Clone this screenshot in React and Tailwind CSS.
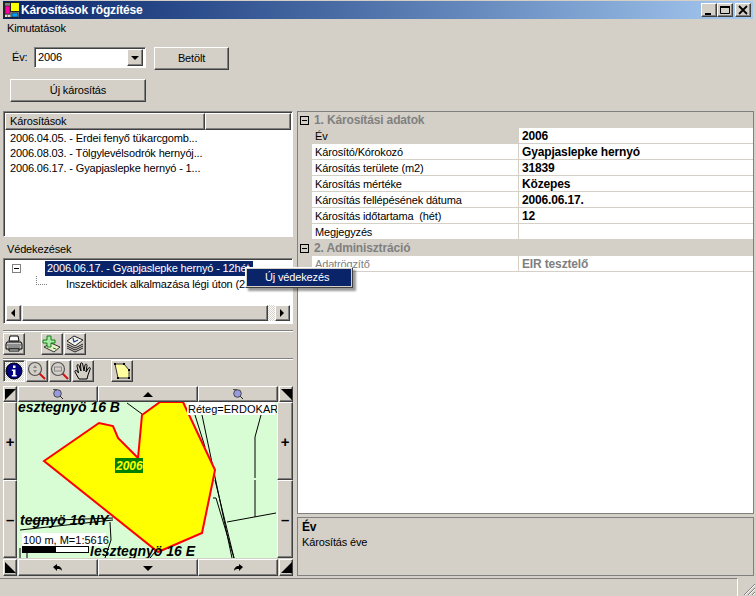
import React from 'react'

const raised = 'border border-t-white border-l-white border-r-[#404040] border-b-[#404040] shadow-[inset_-1px_-1px_0_#808080] bg-[#d4d0c8]'
const sunken = 'border border-t-[#808080] border-l-[#808080] border-r-white border-b-white shadow-[inset_1px_1px_0_#404040]'

const Separator = () => (
  <div className="h-[2px] border-t border-t-[#808080] border-b border-b-white" />
)

const TitleIcon = () => (
  <svg width="16" height="16" viewBox="0 0 16 16" className="shrink-0">
    <rect width="16" height="16" fill="#d4d0c8" />
    <rect x="0.5" y="0.5" width="15" height="15" fill="#808080" stroke="#222" />
    <rect x="1" y="4" width="5" height="8" fill="#ff00a0" stroke="#222" strokeWidth="0.6" />
    <rect x="6.5" y="0.5" width="9" height="9" fill="#ffff00" stroke="#222" />
    <rect x="8" y="11" width="6" height="4" fill="#00a0ff" stroke="#222" strokeWidth="0.6" />
    <rect x="1" y="13" width="2" height="2" fill="#ddd" />
    <rect x="4" y="13" width="2" height="2" fill="#ddd" />
  </svg>
)

const WinButton = ({ children }) => (
  <div className={`${raised} w-[16px] h-[14px] flex items-center justify-center`}>
    <svg width="12" height="10" viewBox="0 0 12 10">{children}</svg>
  </div>
)

const Printer = () => (
  <svg width="18" height="18" viewBox="0 0 18 18">
    <path d="M5 1h8l1 5H4z" fill="#fff" stroke="#000" />
    <path d="M2 7h14l1 2v5H1V9z" fill="#c8c8c8" stroke="#000" />
    <path d="M2 10h14M3 12h12" stroke="#555" />
    <path d="M4 14h10v2H4z" fill="#fff" stroke="#000" />
  </svg>
)

const AddLayer = () => (
  <svg width="20" height="20" viewBox="0 0 20 20">
    <path d="M2 13l7-4 9 4-6 5z" fill="#e8f0c8" stroke="#333" />
    <path d="M5 2h4v4h4v3H9v4H5V9H1V6h4z" fill="#a8e8a8" stroke="#108010" strokeWidth="1" />
    <path d="M11 14l3 1" stroke="#208020" />
  </svg>
)

const Layers = () => (
  <svg width="20" height="20" viewBox="0 0 20 20">
    <path d="M2 14l8 4 8-4M2 12l8 4 8-4M2 10l8 4 8-4" fill="none" stroke="#222" />
    <path d="M2 7l7-5 9 4-8 6z" fill="#f4f4e8" stroke="#222" />
    <path d="M8 4l1 4 4-2" fill="none" stroke="#1a3a9a" strokeWidth="1.2" />
  </svg>
)

const Info = () => (
  <svg width="18" height="18" viewBox="0 0 18 18">
    <circle cx="9" cy="9" r="8" fill="#000080" stroke="#000" />
    <path d="M8 3.5h2.500v2.500H8zM6.800 7.500h3.700v5.500h1.200v1.500H6.800V13h1.200V9H6.800z" fill="#fff" />
  </svg>
)

const Magnifier = ({ children }) => (
  <svg width="20" height="20" viewBox="0 0 20 20">
    <path d="M12 12l6 6" stroke="#d01010" strokeWidth="2" />
    <circle cx="8" cy="8" r="6.500" fill="#d4d0c8" stroke="#555" strokeWidth="1.200" />
    {children}
  </svg>
)

const Hand = () => (
  <svg width="20" height="20" viewBox="0 0 20 20">
    <path
      d="M6 18L2 11c-.7-1.500 1-2 2-1l1.500 2L4 5c-.3-1.500 1.500-2 2-.5L8 10 7.500 3c0-1.500 2-1.500 2.200 0L11 10l1-6c.3-1.500 2.200-1 2 .5L13 11l2.500-4c.8-1.200 2.300-.4 1.700 1L15 14l-1 4z"
      fill="#d4d0c8"
      stroke="#000"
    />
  </svg>
)

const PolygonTool = () => (
  <svg width="20" height="20" viewBox="0 0 20 20">
    <path d="M3 3h9l5 6v8H6z" fill="#ffffa0" stroke="#333" />
    <path d="M2 2h2v2H2zM11 2h2v2h-2zM16 8h2v2h-2zM16 16h2v2h-2zM5 16h2v2H5z" fill="#000" />
  </svg>
)

const SmallZoom = () => (
  <svg width="12" height="12" viewBox="0 0 12 12">
    <path d="M7 7l4 4" stroke="#222" />
    <path d="M1 1h4v1H1z" fill="#555" />
    <circle cx="5.500" cy="5.500" r="3.800" fill="#9a9ae0" stroke="#444" />
  </svg>
)

const ToolButton = ({ className = '', children }) => (
  <div className={`${raised} w-[22px] h-[22px] flex items-center justify-center ${className}`}>
    {children}
  </div>
)

const Corner = ({ points, className = '' }) => (
  <div className={`${raised} h-[16px] flex items-center justify-center ${className}`}>
    <svg width="11" height="11" viewBox="0 0 11 11"><polygon points={points} fill="#000" /></svg>
  </div>
)

const Arrow = ({ d }) => (
  <svg width="12" height="8" viewBox="0 0 12 8"><path d={d} fill="#000" /></svg>
)

const MapView = () => (
  <svg viewBox="17 402 260 156" className="w-[260px] h-[156px] block bg-[#d8fdd4] tracking-normal">
    <g fill="none" stroke="#000" strokeWidth="1">
      <path d="M127 403l15 11" />
      <path d="M195 415l10 32M202 415l30 143M213 498h3l18 60M215 480l19 78" />
      <path d="M261 415l-6 22v41M227 522l49-9M255 480v37" />
      <path d="M20 530l93-10 M110 522l1 18-6 18M27 548v10M155 552l-5 6M20 548v10" />
    </g>
    <polygon
      points="44,461 99,423 113,426 118,438 138,458 142,415 160,402 183,402 215,470 213,480 202,533 158,552"
      fill="#ffff00"
      stroke="#ff0000"
      strokeWidth="2"
    />
    <rect x="115" y="458" width="28" height="15" fill="#008000" />
    <text x="116" y="470" fontSize="12" fontWeight="700" fontStyle="italic" fill="#ffff00">2006</text>
    <g fontSize="14" fontWeight="700" fontStyle="italic" fill="#000">
      <text x="18" y="412">esztegnyö 16 B</text>
      <text x="20" y="525">tegnyö 16 NY</text>
      <text x="90" y="556">lesztegnyö 16 E</text>
    </g>
    <path d="M28 521l85-3" stroke="#000" />
    <rect x="187" y="402" width="88" height="13" fill="#fff" />
    <text x="188" y="413" fontSize="11" fill="#000">Réteg=ERDOKAR</text>
    <rect x="22" y="533" width="84" height="13" fill="#fff" />
    <text x="23" y="544" fontSize="11" fill="#000">100 m, M=1:5616</text>
    <rect x="22.500" y="546.500" width="66" height="6" fill="#fff" stroke="#000" />
    <rect x="23" y="547" width="33" height="5" fill="#000" />
  </svg>
)

const rows = [
  ['Év', '2006'],
  ['Károsító/Kórokozó', 'Gyapjaslepke hernyó'],
  ['Károsítás területe (m2)', '31839'],
  ['Károsítás mértéke', 'Közepes'],
  ['Károsítás fellépésének dátuma', '2006.06.17.'],
  ['Károsítás időtartama  (hét)', '12'],
  ['Megjegyzés', ''],
]

const CollapseBox = () => (
  <div className="w-[9px] h-[9px] border border-black bg-[#d4d0c8] flex items-center justify-center shrink-0">
    <div className="w-[5px] h-px bg-black" />
  </div>
)

const Category = ({ title }) => (
  <div className="h-[16px] bg-[#d4d0c8] flex items-center pl-[2px]">
    <CollapseBox />
    <span className="ml-[5px] font-bold text-[12px] pt-px text-[#808080]">{title}</span>
  </div>
)

const PropRow = ({ label, value, selected, disabled }) => (
  <div className="h-[16px] flex bg-[#d4d0c8]">
    <div className="w-[14px] shrink-0" />
    <div className={`w-[206px] shrink-0 pl-[3px] pt-px leading-[14px] h-[15px] whitespace-pre ${selected ? '' : 'bg-white'} ${disabled ? 'text-[#808080]' : 'text-black'}`}>
      {label}
    </div>
    <div className={`flex-1 ml-px pl-[3px] pt-px leading-[14px] h-[15px] font-bold text-[12px] bg-white ${disabled ? 'text-[#808080]' : 'text-black'}`}>
      {value}
    </div>
  </div>
)

const App = () => {
  return (
    <div
      className="relative w-[756px] h-[596px] overflow-hidden bg-[#d4d0c8] text-black text-[11px] leading-[15px] tracking-[-0.15px]"
      style={{ fontFamily: '"Liberation Sans", Arial, sans-serif' }}
    >
      {/* Title bar */}
      <div className="mt-px mx-[3px] h-[18px] flex items-center bg-gradient-to-r from-[#0a246a] to-[#a6caf0] pl-px pr-[2px]">
        <TitleIcon />
        <span className="ml-px text-white font-bold text-[12px]">Károsítások rögzítése</span>
        <div className="ml-auto flex">
          <WinButton><path d="M2 8h6v2H2z" fill="#000" /></WinButton>
          <WinButton><path d="M1.500 1.500h9v7h-9z" fill="none" stroke="#000" /><path d="M1 1h10v2H1z" fill="#000" /></WinButton>
          <div className="ml-[2px]">
            <WinButton><path d="M2 1l8 8M10 1L2 9" stroke="#000" strokeWidth="1.800" /></WinButton>
          </div>
        </div>
      </div>

      {/* Menu */}
      <div className="h-[19px] pl-[7px] flex items-center">Kimutatások</div>

      {/* Year filter */}
      <div className="mt-[9px] h-[23px] flex items-start">
        <span className="ml-[12px] w-[22px] mt-[3px]">Év:</span>
        <div className={`${sunken} w-[112px] h-[21px] bg-white flex items-center p-[2px] pl-[3px]`}>
          <span className="flex-1">2006</span>
          <div className={`${raised} w-[16px] h-[17px] flex items-center justify-center`}>
            <svg width="8" height="4" viewBox="0 0 8 4"><path d="M0 0h8L4 4z" fill="#000" /></svg>
          </div>
        </div>
        <button className={`${raised} ml-[8px] w-[75px] h-[23px]`}>Betölt</button>
      </div>
      <button className={`${raised} block ml-[10px] mt-[9px] w-[136px] h-[23px]`}>Új károsítás</button>

      <div className="mt-[9px] flex pl-[3px]">
        {/* Left column */}
        <div className="w-[290px] shrink-0">
          <div className={`${sunken} h-[126px] bg-white p-px`}>
            <div className="flex h-[17px]">
              <div className={`${raised} w-[200px] pl-[4px] leading-[15px]`}>Károsítások</div>
              <div className={`${raised} flex-1`} />
            </div>
            <div className="pl-[5px] pt-px leading-[15px]">
              <div>2006.04.05. - Erdei fenyő tükarcgomb...</div>
              <div>2006.08.03. - Tölgylevélsodrók hernyój...</div>
              <div>2006.06.17. - Gyapjaslepke hernyó - 1...</div>
            </div>
          </div>
          <div className="h-[21px] pl-[4px] flex items-end pb-px">Védekezések</div>
          <div className={`${sunken} h-[66px] bg-white p-[2px] flex flex-col`}>
            <div className="h-[15px] flex items-center pl-[6px]">
              <div className="w-[9px] h-[9px] border border-[#808080] bg-white flex items-center justify-center shrink-0">
                <div className="w-[5px] h-px bg-black" />
              </div>
              <div className="ml-[24px] w-[208px] h-[15px] bg-[#0a246a] text-white pl-[2px] whitespace-nowrap">
                2006.06.17. - Gyapjaslepke hernyó - 12hét
              </div>
            </div>
            <div className="h-[18px] flex pl-[30px]">
              <div className="w-[11px] h-[9px] border-l border-b border-dotted border-[#808080]" />
              <span className="ml-[19px] mt-[1px] whitespace-nowrap">Inszekticidek alkalmazása légi úton (2</span>
            </div>
            <div className="mt-auto h-[16px] flex bg-[#d4d0c8]">
              <div className={`${raised} w-[15px] flex items-center justify-center`}>
                <svg width="5" height="8" viewBox="0 0 5 8"><path d="M4 0v8L0 4z" fill="#000" /></svg>
              </div>
              <div className={`${raised} ml-[1px] w-[246px]`} />
              <div className="flex-1 bg-[repeating-conic-gradient(#d4d0c8_0_25%,#ffffff_0_50%)] bg-[length:2px_2px]" />
              <div className={`${raised} w-[15px] flex items-center justify-center`}>
                <svg width="5" height="8" viewBox="0 0 5 8"><path d="M0 0v8l4-4z" fill="#000" /></svg>
              </div>
            </div>
          </div>

          <div className="mt-[6px]"><Separator /></div>
          <div className="flex h-[22px] mt-px">
            <ToolButton><Printer /></ToolButton>
            <ToolButton className="ml-[16px]"><AddLayer /></ToolButton>
            <ToolButton className="ml-px"><Layers /></ToolButton>
          </div>
          <div className="mt-[3px]"><Separator /></div>
          <div className="flex h-[22px]">
            <div className={`${sunken} w-[22px] h-[22px] flex items-center justify-center bg-[repeating-conic-gradient(#d4d0c8_0_25%,#ffffff_0_50%)] bg-[length:2px_2px]`}>
              <Info />
            </div>
            <ToolButton className="ml-px">
              <Magnifier><path d="M8 4l2 3H6zM8 12l2-3H6z" fill="#888" /></Magnifier>
            </ToolButton>
            <ToolButton className="ml-px">
              <Magnifier><rect x="4.500" y="6" width="7" height="4" fill="none" stroke="#888" /></Magnifier>
            </ToolButton>
            <ToolButton className="ml-px"><Hand /></ToolButton>
            <ToolButton className="ml-[17px]"><PolygonTool /></ToolButton>
          </div>

          {/* Map with pan buttons */}
          <div className="mt-[4px]">
            <div className="flex h-[16px]">
              <Corner className="w-[14px]" points="0,0 11,0 0,11" />
              <div className={`${raised} ml-px w-[80px] flex items-center justify-center`}><SmallZoom /></div>
              <div className={`${raised} w-[100px] flex items-center justify-center`}><Arrow d="M1 7h10L6 2z" /></div>
              <div className={`${raised} w-[80px] flex items-center justify-center`}><SmallZoom /></div>
              <Corner className="ml-px w-[14px]" points="0,0 11,0 11,11" />
            </div>
            <div className="flex h-[156px]">
              <div className="w-[14px] flex flex-col">
                <div className={`${raised} flex-1 flex items-center justify-center font-bold text-[15px]`}>+</div>
                <div className={`${raised} flex-1 flex items-center justify-center font-bold text-[15px]`}>–</div>
              </div>
              <MapView />
              <div className="w-[16px] flex flex-col">
                <div className={`${raised} flex-1 flex items-center justify-center font-bold text-[15px]`}>+</div>
                <div className={`${raised} flex-1 flex items-center justify-center font-bold text-[15px]`}>–</div>
              </div>
            </div>
            <div className="flex h-[18px] mt-px">
              <Corner className="w-[14px] h-[17px]" points="0,0 11,11 0,11" />
              <div className={`${raised} ml-px w-[80px] h-[17px] flex items-center justify-center`}>
                <svg width="10" height="8" viewBox="0 0 10 8"><path d="M0 3l4-3v2c3 0 5 2 5 5-1-2-3-2-5-2v2z" fill="#000" /></svg>
              </div>
              <div className={`${raised} w-[100px] h-[17px] flex items-center justify-center`}><Arrow d="M1 2h10L6 7z" /></div>
              <div className={`${raised} w-[80px] h-[17px] flex items-center justify-center`}>
                <svg width="10" height="8" viewBox="0 0 10 8"><path d="M10 3L6 0v2C3 2 1 4 1 7c1-2 3-2 5-2v2z" fill="#000" /></svg>
              </div>
              <Corner className="ml-px w-[14px] h-[17px]" points="11,0 11,11 0,11" />
            </div>
          </div>
        </div>

        {/* Right column */}
        <div className="ml-[4px] w-[457px] flex flex-col">
          <div className="h-[403px] bg-white border border-[#808080]">
            <Category title="1. Károsítási adatok" />
            {rows.map((r, i) => (
              <PropRow key={r[0]} label={r[0]} value={r[1]} selected={i === 0} />
            ))}
            <Category title="2. Adminisztráció" />
            <PropRow label="Adatrögzítő" value="EIR tesztelő" disabled />
          </div>
          <div className="mt-[3px] h-[59px] border border-[#808080] pl-[4px] pt-[2px]">
            <div className="font-bold text-[12px]">Év</div>
            <div>Károsítás éve</div>
          </div>
        </div>
      </div>

      {/* Status bar */}
      <div className="absolute left-0 right-0 bottom-0 h-[18px] flex">
        <div className="w-[738px] border-t border-t-[#808080] border-r border-r-white" />
        <svg width="18" height="18" viewBox="0 0 18 18" className="ml-auto">
          <path d="M6 17L17 6M10 17l7-7M14 17l3-3" stroke="#808080" />
          <path d="M7 17L17 7M11 17l6-6M15 17l2-2" stroke="#fff" />
        </svg>
      </div>

      {/* Context menu */}
      <div className="absolute left-[245px] top-[267px] w-[108px] h-[21px] border border-t-white border-l-white border-r-[#404040] border-b-[#404040] bg-[#d4d0c8] p-px shadow-[3px_3px_2px_rgba(0,0,0,0.4)]">
        <div className="h-full bg-[#0a246a] text-white pl-[18px] leading-[17px]">Új védekezés</div>
      </div>
    </div>
  )
}

export default App
